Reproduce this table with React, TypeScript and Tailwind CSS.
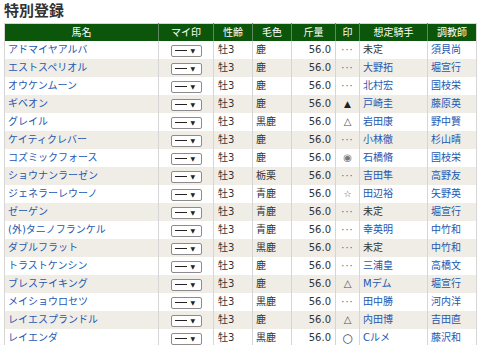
import React from 'react'

type Row = {
  name: string
  sex: string
  color: string
  weight: string
  mark: string
  jockey: string
  trainer: string
}

const ROWS: Row[] = [
  { name: 'アドマイヤアルバ', sex: '牡3', color: '鹿', weight: '56.0', mark: '…', jockey: '未定', trainer: '須貝尚' },
  { name: 'エストスペリオル', sex: '牡3', color: '鹿', weight: '56.0', mark: '…', jockey: '大野拓', trainer: '堀宣行' },
  { name: 'オウケンムーン', sex: '牡3', color: '鹿', weight: '56.0', mark: '…', jockey: '北村宏', trainer: '国枝栄' },
  { name: 'ギベオン', sex: '牡3', color: '鹿', weight: '56.0', mark: '▲', jockey: '戸崎圭', trainer: '藤原英' },
  { name: 'グレイル', sex: '牡3', color: '黒鹿', weight: '56.0', mark: '△', jockey: '岩田康', trainer: '野中賢' },
  { name: 'ケイティクレバー', sex: '牡3', color: '鹿', weight: '56.0', mark: '…', jockey: '小林徹', trainer: '杉山晴' },
  { name: 'コズミックフォース', sex: '牡3', color: '鹿', weight: '56.0', mark: '◎', jockey: '石橋脩', trainer: '国枝栄' },
  { name: 'ショウナンラーゼン', sex: '牡3', color: '栃栗', weight: '56.0', mark: '…', jockey: '吉田隼', trainer: '高野友' },
  { name: 'ジェネラーレウーノ', sex: '牡3', color: '青鹿', weight: '56.0', mark: '☆', jockey: '田辺裕', trainer: '矢野英' },
  { name: 'ゼーゲン', sex: '牡3', color: '青鹿', weight: '56.0', mark: '…', jockey: '未定', trainer: '堀宣行' },
  { name: '(外)タニノフランケル', sex: '牡3', color: '青鹿', weight: '56.0', mark: '…', jockey: '幸英明', trainer: '中竹和' },
  { name: 'ダブルフラット', sex: '牡3', color: '黒鹿', weight: '56.0', mark: '…', jockey: '未定', trainer: '中竹和' },
  { name: 'トラストケンシン', sex: '牡3', color: '鹿', weight: '56.0', mark: '…', jockey: '三浦皇', trainer: '高橋文' },
  { name: 'ブレステイキング', sex: '牡3', color: '鹿', weight: '56.0', mark: '△', jockey: 'Mデム', trainer: '堀宣行' },
  { name: 'メイショウロセツ', sex: '牡3', color: '黒鹿', weight: '56.0', mark: '…', jockey: '田中勝', trainer: '河内洋' },
  { name: 'レイエスプランドル', sex: '牡3', color: '鹿', weight: '56.0', mark: '△', jockey: '内田博', trainer: '吉田直' },
  { name: 'レイエンダ', sex: '牡3', color: '黒鹿', weight: '56.0', mark: '○', jockey: 'Cルメ', trainer: '藤沢和' },
]

function MyMark() {
  return (
    <div className="mx-auto mt-[2px] flex h-[12px] w-[31px] items-center rounded-[2px] border border-[#8c8c8c] bg-white pl-[3px]">
      <div className="h-px w-[12px] bg-[#222]" />
      <span className="ml-[4px] text-[6px] leading-none text-[#222]">▼</span>
    </div>
  )
}

function Mark({ m }: { m: string }) {
  if (m === '…') return <span className="tracking-[1px] text-[#666]">···</span>
  if (m === '▲') return <span className="text-[9px] text-[#222]">▲</span>
  if (m === '△') return <span className="text-[10px] text-[#555]">△</span>
  if (m === '☆') return <span className="text-[9px] text-[#555]">☆</span>
  if (m === '◎') return <span className="text-[10px] text-[#777]">◉</span>
  return <span className="text-[12px] text-[#444]">○</span>
}

const th = 'h-[17px] border-l border-[#5f8a5f] p-0 text-center font-normal text-white first:border-l-0'
const td = 'h-[18px] border-l border-[#d6d6d6] p-0 align-middle'

export default function App() {
  return (
    <div className="h-[345px] w-[480px] overflow-hidden bg-white font-['DejaVu_Sans','Noto_Sans_CJK_JP',sans-serif] text-[10px] text-[#333]">
      <h2 className="h-[23px] pl-[4px] pt-[2px] text-[15px] font-bold leading-[18px] text-[#333]">特別登録</h2>
      <table className="ml-[4px] w-[472px] table-fixed border-collapse border border-[#d6d6d6]">
        <colgroup>
          <col className="w-[154px]" />
          <col className="w-[55px]" />
          <col className="w-[39px]" />
          <col className="w-[39px]" />
          <col className="w-[44px]" />
          <col className="w-[24px]" />
          <col className="w-[68px]" />
          <col className="w-[49px]" />
        </colgroup>
        <thead>
          <tr className="bg-[#0b560b]">
            <th className={th}>馬名</th>
            <th className={th}>マイ印</th>
            <th className={th}>性齢</th>
            <th className={th}>毛色</th>
            <th className={th}>斤量</th>
            <th className={th}>印</th>
            <th className={th}>想定騎手</th>
            <th className={th}>調教師</th>
          </tr>
        </thead>
        <tbody>
          {ROWS.map((r, i) => (
            <tr key={r.name} className={i % 2 === 1 ? 'bg-[#f0ede6]' : 'bg-white'}>
              <td className={td + ' pl-[3px] text-[#2457b0]'}>{r.name}</td>
              <td className={td}>
                <MyMark />
              </td>
              <td className={td + ' pl-[4px]'}>{r.sex}</td>
              <td className={td + ' pl-[3px]'}>{r.color}</td>
              <td className={td + ' pr-[4px] text-right'}>{r.weight}</td>
              <td className={td + ' text-center'}>
                <Mark m={r.mark} />
              </td>
              <td className={td + ' pl-[3px] ' + (r.jockey === '未定' ? 'text-[#333]' : 'text-[#2457b0]')}>{r.jockey}</td>
              <td className={td + ' pl-[3px] text-[#2457b0]'}>{r.trainer}</td>
            </tr>
          ))}
        </tbody>
      </table>
    </div>
  )
}
